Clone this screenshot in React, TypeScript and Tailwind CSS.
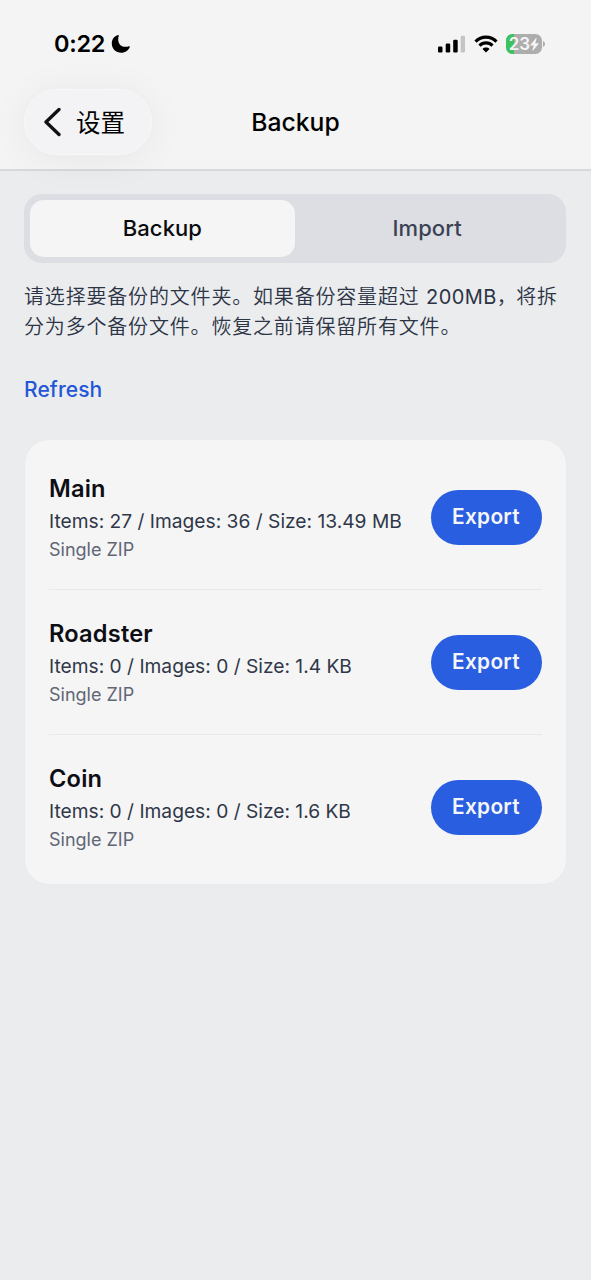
import { useState } from "react";

const folders = [
  { id: 1, name: "Main", items: 27, images: 36, size: "13.49 MB", type: "Single ZIP" },
  { id: 2, name: "Roadster", items: 0, images: 0, size: "1.4 KB", type: "Single ZIP" },
  { id: 3, name: "Coin", items: 0, images: 0, size: "1.6 KB", type: "Single ZIP" },
];

const tabs = ["Backup", "Import"];

function StatusBar() {
  return (
    <div className="flex h-[88px] items-center pl-[54px] pr-[46px]">
      <span className="text-[23.5px] font-semibold leading-7 tracking-[-0.3px] text-black">0:22</span>
      <svg className="ml-[6px]" width="20" height="20" viewBox="0 0 20 20" fill="#000">
        <path d="M6.5 1.2C2.9 2.4.8 5.6.8 9.4c0 5.3 4.2 9.3 9.4 9.3 3.8 0 7-2.1 8.5-5.5.3-.8-.2-1.2-.9-.9-1 .4-1.9.5-3 .5-4.6 0-7.6-2.9-7.6-7.4 0-1.2.1-2.2.5-3.2.2-.8-.4-1.3-1.2-1z" />
      </svg>

      <div className="ml-auto flex items-center">
        <svg width="27" height="18" viewBox="0 0 27 18">
          <rect x="0" y="11.5" width="4.5" height="6" rx="1.2" fill="#000" />
          <rect x="7.7" y="8.5" width="4.5" height="9" rx="1.2" fill="#000" />
          <rect x="15.2" y="4.7" width="4.5" height="12.8" rx="1.2" fill="#000" />
          <rect x="22.7" y="0.7" width="4.3" height="16.8" rx="1.2" fill="#c4c4c4" />
        </svg>
        <svg className="ml-[9px]" width="24" height="18" viewBox="0 0 24 18" fill="none" stroke="#000">
          <path d="M1.5 6.6C7.4.6 16.6.6 22.5 6.6" strokeWidth="3.1" />
          <path d="M5.5 10.6c3.6-3.6 9.4-3.6 13 0" strokeWidth="3.1" />
          <path d="M12 17.6l-3.5-3.7c1.9-1.9 5.1-1.9 7 0z" fill="#000" stroke="none" />
        </svg>
        {/* Battery */}
        <div className="relative ml-2 flex h-[20px] w-[36px] items-center justify-center overflow-hidden rounded-[6.5px] bg-[#adadad]">
          <div className="absolute inset-y-0 left-0 w-[8px] bg-[#3cc35f]" />
          <span className="relative text-[17px] font-semibold leading-5 text-[#f4f4f4]">23</span>
          <svg className="relative" width="9" height="13" viewBox="0 0 9 13" fill="#f4f4f4">
            <path d="M5.8.3.5 6.8c-.3.4-.1.7.3.7h2.9L2.4 12c-.2.6.3.8.7.4L8.5 6c.3-.4.1-.7-.3-.7H5.3L6.5.7C6.7.1 6.2-.1 5.8.3z" />
          </svg>
        </div>
        <svg className="ml-[1px]" width="2" height="6" viewBox="0 0 2 6" fill="#adadad">
          <path d="M0 0c1.3.5 2 1.6 2 3s-.7 2.5-2 3z" />
        </svg>
      </div>
    </div>
  );
}

export default function App() {
  const [activeTab, setActiveTab] = useState("Backup");

  return (
    <div className="min-h-[1280px] w-full bg-[#ebecee] font-[Inter,'Noto_Sans_CJK_SC',sans-serif]">
      <header className="h-[171px] border-b-2 border-[#d9d9db] bg-[#f4f4f4]">
        <StatusBar />
        {/* Navigation */}
        <div className="grid h-[68px] grid-cols-[1fr_auto_1fr] items-center px-6">
          <button className="flex h-[66px] w-[128px] items-center rounded-full border border-[#f8f8f9] bg-[#f3f3f5] pl-[19px] shadow-[0_4px_40px_rgba(0,0,0,0.06)]">
            <svg width="18" height="30" viewBox="0 0 18 30" fill="none" stroke="#111" strokeWidth="3.3" strokeLinecap="round" strokeLinejoin="round">
              <path d="M15 2.5 2 15l13 12.5" />
            </svg>
            <span className="ml-[14px] translate-y-px text-[24.5px] leading-8 text-black">设置</span>
          </button>
          <h1 className="text-[24.7px] font-[550] leading-8 text-black">Backup</h1>
        </div>
      </header>

      <main className="pl-[25px] pr-[25.5px] pt-[23px]">
        <div className="-ml-px flex h-[69px] rounded-[18px] bg-[#dddee3] p-[6px]">
          {tabs.map((tab) => (
            <button
              key={tab}
              onClick={() => setActiveTab(tab)}
              className={`flex-1 rounded-[14px] text-[22px] tracking-[0.1px] ${
                activeTab === tab ? "bg-[#f5f5f5] font-[550] text-[#0b0c10]" : "font-medium text-[#3c4254]"
              }`}
            >
              {tab}
            </button>
          ))}
        </div>

        <p className="-ml-px mt-[19px] whitespace-nowrap text-[20px] font-[350] leading-[30px] tracking-[0.82px] text-[#2c3445]">
          请选择要备份的文件夹。如果备份容量超过{" "}
          <span className="font-[375] tracking-[0.4px]">200MB</span>
          <span className="tracking-[-0.5px]">，</span>将拆
          <br />
          分为多个备份文件。恢复之前请保留所有文件。
        </p>

        <button className="-ml-px mt-[33px] block text-[21px] font-medium leading-[30px] tracking-[0.1px] text-[#2456d8]">
          Refresh
        </button>

        {/* Folder list */}
        <div className="mt-[35px] rounded-[24px] bg-[#f5f5f5] px-6 py-[5px] shadow-[0_0_2px_rgba(0,0,0,0.03)]">
          {folders.map((folder) => (
            <div
              key={folder.id}
              className="flex h-[145px] items-center justify-between border-b border-[#e8e9eb] last:h-[144px] last:border-b-0"
            >
              <div className="pt-[2px]">
                <h2 className="text-[23.6px] font-semibold leading-8 tracking-[0.2px] text-[#0d0e14]">{folder.name}</h2>
                <p className="text-[19.2px] font-[375] leading-8 text-[#2f3748]">
                  Items: {folder.items} / Images: {folder.images} / Size: {folder.size}
                </p>
                <p className="text-[18px] font-[375] leading-[26px] text-[#606675]">{folder.type}</p>
              </div>
              <button className="h-[55px] w-[111px] rounded-full bg-[#285edf] text-[20.8px] font-semibold tracking-[0.3px] text-[#f5f6fa]">
                Export
              </button>
            </div>
          ))}
        </div>
      </main>
    </div>
  );
}
